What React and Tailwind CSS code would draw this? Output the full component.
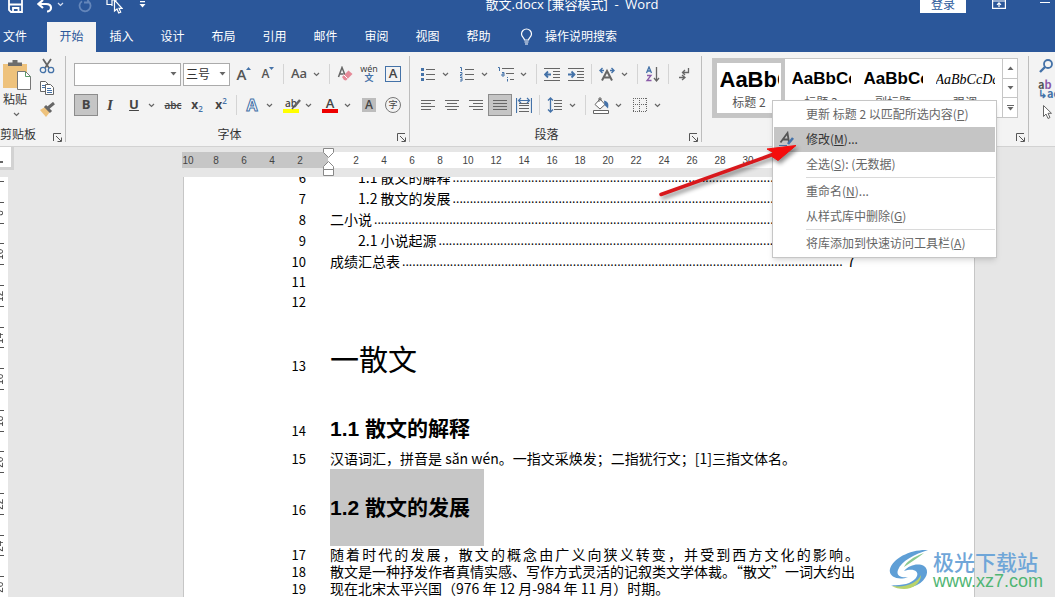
import React from "react";

const TABS = ["插入", "设计", "布局", "引用", "邮件", "审阅", "视图", "帮助"];

const STYLES = [
  { name: "标题 2", sample: "AaBbCc", cls: "text-[22px] font-bold" },
  { name: "标题 3", sample: "AaBbCc", cls: "text-[17px] font-bold" },
  { name: "副标题", sample: "AaBbCc", cls: "text-[17px] font-bold" },
  { name: "强调", sample: "AaBbCcDd", cls: "font-['Liberation_Serif',serif] text-[14px] italic" },
];

const TOC = [
  { no: 6, text: "1.1 散文的解释", sub: true },
  { no: 7, text: "1.2 散文的发展", sub: true },
  { no: 8, text: "二小说" },
  { no: 9, text: "2.1 小说起源", sub: true },
  { no: 10, text: "成绩汇总表", page: 7 },
];

const MENU = [
  { text: "更新 标题 2 以匹配所选内容", hotkey: "P" },
  { text: "修改", hotkey: "M", tail: "...", active: true },
  { text: "全选", hotkey: "S", tail: ": (无数据)" },
  null,
  { text: "重命名", hotkey: "N", tail: "..." },
  { text: "从样式库中删除", hotkey: "G" },
  null,
  { text: "将库添加到快速访问工具栏", hotkey: "A" },
];

const GRAY = "#666666";
const BLUE = "#4472a8";

function Chevron({ color = GRAY }) {
  return (
    <svg width="7" height="5" viewBox="0 0 7 5" fill="none" stroke={color} strokeWidth="1.2">
      <path d="M1 1l2.5 2.5L6 1" />
    </svg>
  );
}

function Triangle({ up }) {
  return (
    <svg width="7" height="4" viewBox="0 0 7 4" fill={GRAY}>
      <path d={up ? "M0.5 4L3.5 0.5 6.5 4z" : "M0.5 0L3.5 3.5 6.5 0z"} />
    </svg>
  );
}

function Tool({ label, active, drop, children }) {
  return (
    <>
      <button
        aria-label={label}
        className={`flex h-[22px] w-6 shrink-0 items-center justify-center ${
          active ? "border border-[#8c8c8c] bg-[#c5c5c5]" : ""
        }`}
      >
        {children}
      </button>
      {drop && (
        <button aria-label={`${label}选项`} className="flex h-[22px] w-[15px] shrink-0 items-center pl-0.5">
          <Chevron />
        </button>
      )}
    </>
  );
}

const Sep = () => <div className="mx-[3px] h-5 w-px shrink-0 bg-[#d4d4d4]" />;

function Icon({ w = 16, h = 16, children }) {
  return (
    <svg width={w} height={h} viewBox={`0 0 ${w} ${h}`} fill="none" stroke={GRAY} strokeWidth="1">
      {children}
    </svg>
  );
}

function AlignIcon({ lines }) {
  return (
    <Icon>
      {lines.map(([x1, x2], i) => (
        <path key={i} d={`M${x1} ${3.5 + i * 3}H${x2}`} />
      ))}
    </Icon>
  );
}

function Launcher({ label }) {
  return (
    <button aria-label={label} className="mr-[3px] self-end">
      <Icon w={9} h={9}>
        <path d="M0.5 8V0.5H8M3 3l5 5M8.5 4.5v4h-4" stroke="#555" />
      </Icon>
    </button>
  );
}

function Group({ label, className = "", children }) {
  return (
    <section className={`relative my-1 flex shrink-0 flex-col border-r border-[#bdbdbd] pt-[7px] ${className}`}>
      <div className="flex h-[63px] flex-col gap-[9px]">{children}</div>
      <div className="flex h-[17px] items-center">
        <span className="flex-1 pr-3 text-center leading-[17px] whitespace-nowrap text-[#333]">{label}</span>
        <Launcher label={`${label}设置`} />
      </div>
    </section>
  );
}

function TitleBar() {
  return (
    <header className="flex h-[22px] items-start bg-[#2b579a] text-white">
      <div className="flex w-56 shrink-0 items-start pl-2">
        <button aria-label="保存" className="mr-[14px]">
          <svg width="15" height="13" viewBox="0 0 15 13" fill="none" stroke="#fff" strokeWidth="1.8">
            <path d="M1 0v10l2 2h11V0M1 4.500h13" />
            <path d="M5 12V8h5.500v4" />
          </svg>
        </button>
        <button aria-label="撤消">
          <svg width="16" height="13" viewBox="0 0 16 13" fill="none" stroke="#fff" strokeWidth="2.200">
            <path d="M1.500 4H9c3 0 5 1.500 5 3.800S12 11.500 10 11.500M6 0L1.500 4 6 8" />
          </svg>
        </button>
        <button aria-label="撤消选项" className="mr-[14px] pt-0.5 pl-1">
          <Chevron color="#d5def0" />
        </button>
        <button aria-label="恢复" className="mr-[14px]">
          <svg width="14" height="13" viewBox="0 0 14 13" fill="none" stroke="#6486ba" strokeWidth="1.8">
            <path d="M4 1.200A5.500 5.500 0 1 0 10.500 1.500M10 -2v4.500H6" />
          </svg>
        </button>
        <button aria-label="触摸模式" className="mr-[16px]">
          <svg width="17" height="14" viewBox="0 0 17 14" fill="none" stroke="#fff" strokeWidth="1.200">
            <path d="M1 0v4.500h5M6 0v6M6 0h5" />
            <path d="M8.500 0v11l2.500-2 1.700 4 2-.9-1.700-3.800h3L8.500 0z" fill="#2b579a" />
          </svg>
        </button>
        <button aria-label="自定义快速访问工具栏">
          <svg width="7" height="8" viewBox="0 0 7 8" fill="#fff">
            <path d="M1 1h5v1.200H1zM0.500 4h6L3.500 7.500z" />
          </svg>
        </button>
      </div>
      <h1 className="-mt-[5px] flex-1 text-center font-['Open_Sans','Noto_Sans_CJK_SC',sans-serif] text-[13px] leading-[18px] whitespace-pre">
        散文.docx [兼容模式]{"  -  "}Word
      </h1>
      <div className="flex w-[135px] shrink-0 items-start">
        <button className="h-[13px] w-[46px] bg-white text-[#2b579a]">
          <span className="-mt-[6px] block leading-[18px]">登录</span>
        </button>
        <button aria-label="功能区显示选项" className="ml-[26px]">
          <svg width="14" height="9" viewBox="0 0 14 9" fill="none" stroke="#fff" strokeWidth="1.200">
            <path d="M0.600 0v8.400h12.800V0M0 1h14M7 7V3M5 4.800l2-2 2 2" />
          </svg>
        </button>
        <button aria-label="最小化" className="mt-[2px] ml-[34px] h-px w-2.5 bg-white" />
      </div>
    </header>
  );
}

function TabBar() {
  return (
    <nav className="flex h-[30px] bg-[#2b579a] text-white">
      <button className="w-[47px] pb-0.5 pl-[3px] text-left">文件</button>
      <button className="w-[49px] bg-[#f3f3f3] pb-0.5 text-[#2b579a]">开始</button>
      {TABS.map((tab) => (
        <button key={tab} className="w-[51px] pb-0.5">
          {tab}
        </button>
      ))}
      <button className="flex items-center gap-3 pb-0.5 pl-4">
        <svg width="13" height="17" viewBox="0 0 13 17" fill="none" stroke="#fff" strokeWidth="1.200">
          <path d="M4.500 12c0-2-3-3-3-6a5 5 0 0 1 10 0c0 3-3 4-3 6zM4.500 14h4M5 16h3" />
        </svg>
        操作说明搜索
      </button>
    </nav>
  );
}

function Clipboard() {
  return (
    <section className="my-1 flex w-[66px] shrink-0 flex-col border-r border-[#bdbdbd]">
      <div className="flex h-[70px]">
        <button className="flex w-[34px] flex-col items-start pt-1 pl-[3px] text-[#333]">
          <svg width="28" height="30" viewBox="0 0 28 30" fill="none">
            <path d="M0 4h24v24H0z" fill="#eec27c" />
            <path d="M5 6V2.500h4.500V0h5v2.500H19V6z" fill="#6d6d6d" />
            <path d="M14.500 11.500h8l5 5v13h-13z" fill="#fff" stroke="#777" />
            <path d="M22.500 11.500v5h5" stroke="#5b9a68" />
          </svg>
          <span className="leading-[18px]">粘贴</span>
          <span className="mt-1 ml-[10px]">
            <Chevron />
          </span>
        </button>
        <div className="flex flex-col items-center gap-[6px] pt-0.5 pl-[5px]">
          <button aria-label="剪切">
            <Icon w={16} h={16}>
              <path d="M4 1l6 9M12 1L6 10" strokeWidth="1.800" />
              <circle cx="4" cy="12" r="2.700" stroke={BLUE} strokeWidth="1.300" />
              <circle cx="12" cy="12" r="2.700" stroke={BLUE} strokeWidth="1.300" />
            </Icon>
          </button>
          <button aria-label="复制">
            <Icon w={16} h={16}>
              <path d="M1.500 1.500h5l3 3v7h-8z" fill="#fff" />
              <path d="M6.500 4.500h5l3 3v7h-8z" fill="#fff" />
              <path d="M8 8.500h4M8 10.500h5M8 12.500h5M3 5.500h3M3 7.500h3" stroke={BLUE} />
            </Icon>
          </button>
          <button aria-label="格式刷">
            <Icon w={16} h={16}>
              <path d="M1 8l5-3 5 5-4 5z" fill="#eec27c" stroke="none" />
              <path d="M6 4l6 6M9 6l6-5" strokeWidth="3" />
            </Icon>
          </button>
        </div>
      </div>
      <div className="flex h-[17px] items-center justify-between">
        <span className="leading-[17px] whitespace-nowrap text-[#333]">剪贴板</span>
        <Launcher label="剪贴板设置" />
      </div>
    </section>
  );
}

function FontGroup() {
  return (
    <Group label="字体" className="w-[344px] pl-2">
      <div className="flex h-[22px] items-center">
        <label className="relative mr-0.5 flex items-center">
          <select
            aria-label="字体"
            className="h-[23px] w-[107px] appearance-none border border-[#ababab] bg-white px-1 outline-none"
          />
          <span className="pointer-events-none absolute right-1">
            <Triangle />
          </span>
        </label>
        <label className="relative mr-0.5 flex items-center">
          <select
            aria-label="字号"
            className="h-[23px] w-[47px] appearance-none border border-[#ababab] bg-white px-0.5 text-[#333] outline-none"
          >
            <option>三号</option>
          </select>
          <span className="pointer-events-none absolute right-1">
            <Triangle />
          </span>
        </label>
        <Tool label="增大字号">
          <span className="font-['Open_Sans',sans-serif] text-[15px] font-semibold text-[#555]">A</span>
          <svg width="5" height="3" viewBox="0 0 5 3" fill={BLUE} className="mb-3">
            <path d="M0 3L2.500 0 5 3z" />
          </svg>
        </Tool>
        <Tool label="减小字号">
          <span className="font-['Open_Sans',sans-serif] text-[12px] font-semibold text-[#555]">A</span>
          <svg width="5" height="3" viewBox="0 0 5 3" fill={BLUE} className="mb-3">
            <path d="M0 0l2.500 3L5 0z" />
          </svg>
        </Tool>
        <Sep />
        <Tool label="更改大小写" drop>
          <span className="font-['Open_Sans',sans-serif] text-[13px] font-semibold text-[#555]">Aa</span>
        </Tool>
        <Sep />
        <Tool label="清除格式">
          <Icon w={16} h={16}>
            <path d="M1.500 11L5 1.500 8 9M2.500 8h4" strokeWidth="1.500" />
            <path d="M5 11l6.500-6.500 4 3.500L9 14.500 7 14z" fill="#e58a98" stroke="none" />
            <path d="M7 9l3.500 3.500" stroke="#fff" />
          </Icon>
        </Tool>
        <Tool label="拼音指南">
          <span className="flex flex-col items-center">
            <span className="font-['Open_Sans',sans-serif] text-[9px] leading-[8px] text-[#333]">wén</span>
            <span className="text-[9px] leading-[10px] font-bold text-[#4472a8]">文</span>
          </span>
        </Tool>
        <Tool label="字符边框">
          <span className="flex h-4 w-4 items-center justify-center border border-[#4472a8] font-['Open_Sans',sans-serif] text-[13px] font-semibold text-[#444]">
            A
          </span>
        </Tool>
      </div>
      <div className="flex h-[22px] items-center font-['Open_Sans','Noto_Sans_CJK_SC',sans-serif] text-[#444]">
        <Tool label="加粗" active>
          <span className="text-[13px] font-bold">B</span>
        </Tool>
        <Tool label="倾斜">
          <span className="font-['Liberation_Serif',serif] text-[15px] font-bold italic">I</span>
        </Tool>
        <Tool label="下划线" drop>
          <span className="text-[13px] font-bold underline">U</span>
        </Tool>
        <Tool label="删除线">
          <span className="text-[10px] font-semibold line-through">abc</span>
        </Tool>
        <Tool label="下标">
          <span className="text-[12px] font-bold">x</span>
          <span className="mt-2 text-[8px] font-semibold text-[#4472a8]">2</span>
        </Tool>
        <Tool label="上标">
          <span className="text-[12px] font-bold">x</span>
          <span className="mb-2 text-[8px] font-semibold text-[#4472a8]">2</span>
        </Tool>
        <Sep />
        <Tool label="文本效果" drop>
          <span className="text-[16px] font-bold text-white [-webkit-text-stroke:1px_#4472a8]">A</span>
        </Tool>
        <Tool label="突出显示" drop>
          <span className="flex flex-col items-center">
            <span className="relative text-[10px] leading-[12px] font-semibold">
              ab
              <svg width="10" height="11" viewBox="0 0 10 11" className="absolute top-0.5 left-1.5" fill="none">
                <path d="M9 1L3 8" stroke="#666" strokeWidth="2.500" />
                <path d="M3.500 7L1 10" stroke="#555" strokeWidth="1.500" />
              </svg>
            </span>
            <span className="h-[4px] w-4 bg-[#ffff00]" />
          </span>
        </Tool>
        <Tool label="字体颜色" drop>
          <span className="flex flex-col items-center">
            <span className="text-[13px] leading-[12px] font-semibold">A</span>
            <span className="h-[4px] w-4 bg-[#ee0000]" />
          </span>
        </Tool>
        <Tool label="字符底纹">
          <span className="h-[14px] w-[14px] bg-[#bdbdbd] text-[12px] leading-[14px] font-semibold">A</span>
        </Tool>
        <Tool label="带圈字符">
          <span className="h-4 w-4 rounded-full border border-[#777] text-[9px] leading-[14px]">字</span>
        </Tool>
      </div>
    </Group>
  );
}

function ParagraphGroup() {
  return (
    <Group label="段落" className="w-[292px] pl-[6px]">
      <div className="flex h-[22px] items-center">
        <Tool label="项目符号" drop>
          <Icon>
            <path d="M6 3.500h9M6 8.500h9M6 13.500h9" />
            <path d="M1 3.500h3M1 8.500h3M1 13.500h3" stroke={BLUE} strokeWidth="3" />
          </Icon>
        </Tool>
        <Tool label="编号" drop>
          <Icon>
            <path d="M6 3.500h9M6 8.500h9M6 13.500h9" />
            <path d="M1 1.500h1.500V5M1 6.500h2v2H1.500v1.500h2M1 11.500h2v3.500H1M1.500 13.500h1" stroke={BLUE} />
          </Icon>
        </Tool>
        <Tool label="多级列表" drop>
          <Icon w={18} h={16}>
            <path d="M5 2.500h12M9 7.500h8M13 13.500h4" />
            <path d="M1 1.500h1.500V5M5 6.500h2v3.500H5V8h2M10.500 11v1M10.500 13v2.500" stroke={BLUE} />
          </Icon>
        </Tool>
        <Sep />
        <Tool label="减少缩进量">
          <Icon>
            <path d="M0 2.500h16M9 5.500h7M9 8.500h7M9 11.500h7M0 14.500h16" />
            <path d="M7 8.500H1M4 5.500l-3 3 3 3" stroke={BLUE} strokeWidth="1.800" />
          </Icon>
        </Tool>
        <Tool label="增加缩进量">
          <Icon>
            <path d="M0 2.500h16M9 5.500h7M9 8.500h7M9 11.500h7M0 14.500h16" />
            <path d="M0 8.500h6M3.500 5.500l3 3-3 3" stroke={BLUE} strokeWidth="1.800" />
          </Icon>
        </Tool>
        <Sep />
        <Tool label="中文版式" drop>
          <Icon>
            <path d="M3 14.500L8 5l5 9.500M5 11.500h6" strokeWidth="2" />
            <path d="M5 4.500H1M3.500 2L1 4.500 3.500 7M11 4.500h4M12.500 2L15 4.500 12.500 7" stroke={BLUE} strokeWidth="1.400" />
          </Icon>
        </Tool>
        <Sep />
        <Tool label="排序">
          <Icon>
            <path d="M1.500 7L4 1l2.500 6M2.500 5h3" stroke={BLUE} strokeWidth="1.300" />
            <path d="M2 9.500h4L2 14.500h4.500" stroke="#8a5aa8" strokeWidth="1.300" />
            <path d="M11.500 1v14M9 12l2.500 3 2.500-3" strokeWidth="1.300" />
          </Icon>
        </Tool>
        <Sep />
        <Tool label="显示编辑标记">
          <Icon w={14} h={14}>
            <path d="M11.500 1v4.500H6M8 3L5.500 5.500 8 8M2 10.500h6M5 8l3 2.500L5 13" strokeWidth="1.300" />
          </Icon>
        </Tool>
      </div>
      <div className="flex h-[22px] items-center">
        <Tool label="左对齐">
          <AlignIcon lines={[[1, 15], [1, 11], [1, 15], [1, 11]]} />
        </Tool>
        <Tool label="居中">
          <AlignIcon lines={[[1, 15], [3, 13], [1, 15], [3, 13]]} />
        </Tool>
        <Tool label="右对齐">
          <AlignIcon lines={[[1, 15], [5, 15], [1, 15], [5, 15]]} />
        </Tool>
        <Tool label="两端对齐" active>
          <AlignIcon lines={[[1, 15], [1, 15], [1, 15], [1, 15]]} />
        </Tool>
        <Tool label="分散对齐">
          <Icon>
            <path d="M3 6.500h10M3 8.500h10M3 11.500h10M3 14.500h10" />
            <path d="M0.500 1v15M15.500 1v15M3 3.500h10M5 1L2.500 3.500 5 6M11 1l2.500 2.500L11 6" stroke={BLUE} strokeWidth="1.200" />
          </Icon>
        </Tool>
        <Sep />
        <Tool label="行距" drop>
          <Icon>
            <path d="M7 3.500h8M7 6.500h8M7 9.500h8M7 12.500h8" />
            <path d="M3.500 1v14M1 3.500L3.500 1 6 3.500M1 12.500L3.500 15 6 12.500" stroke={BLUE} strokeWidth="1.300" />
          </Icon>
        </Tool>
        <Sep />
        <Tool label="底纹" drop>
          <Icon w={18} h={17}>
            <path d="M3 7.500L8 2l5 5.500L8 12z" fill="#fff" />
            <path d="M7 5V1h2v3" />
            <path d="M12 3.500c4 1 5 3 4 8L12.500 8z" fill={BLUE} stroke="none" />
            <path d="M1.500 13.500h15v3h-15z" fill="#fff" />
          </Icon>
        </Tool>
        <Tool label="边框" drop>
          <Icon w={14} h={14}>
            <path d="M0 0.500h14M0 13.500h14M0.500 0v14M13.500 0v14M6.500 0v14M0 6.500h14" strokeDasharray="1 1" />
          </Icon>
        </Tool>
      </div>
    </Group>
  );
}

function ContextMenu() {
  return (
    <div className="absolute top-[44px] left-[70px] z-20 w-[225px]">
      <div role="menu" className="border border-[#c6c6c6] bg-white p-px text-[#666] shadow-md">
        {MENU.map((item, i) =>
          item ? (
            <button
              key={i}
              role="menuitem"
              className={`flex h-[25px] w-full items-center pb-0.5 whitespace-nowrap ${
                item.active ? "bg-[#c5c5c5] text-[#333]" : ""
              }`}
            >
              <span className="flex w-8 shrink-0 pl-1">
                {item.active && (
                  <Icon w={16} h={16}>
                    <path d="M2.500 11.500L9.500 2l1.500 9.500M5 8.500h5.500" stroke="#555" strokeWidth="1.800" />
                    <path d="M1 14.500h8" stroke={BLUE} />
                    <path d="M15 7l-5 6" stroke={BLUE} strokeWidth="2.600" />
                  </Icon>
                )}
              </span>
              <span>
                {item.text}(<u>{item.hotkey}</u>){item.tail}
              </span>
            </button>
          ) : (
            <div key={i} className="mb-px ml-8 h-px bg-[#dadada]" />
          )
        )}
      </div>
      <svg
        width="150"
        height="64"
        viewBox="0 0 150 64"
        className="pointer-events-none absolute top-[40px] -left-[116px] drop-shadow-[2px_3px_2px_rgba(0,0,0,0.45)]"
      >
        <path d="M5 54.500L118 14" stroke="#d8181c" strokeWidth="3.500" strokeLinecap="round" />
        <path d="M140 5.500L111 9l6 3.500-1 4 6 4z" fill="#f40d0d" stroke="#f40d0d" strokeLinejoin="round" />
      </svg>
    </div>
  );
}

function StylesGroup() {
  return (
    <section className="relative my-1 flex w-[327px] shrink-0 flex-col border-r border-[#bdbdbd] pt-0.5 pl-[10px]">
      <div className="mr-[10px] flex h-[60px] border border-[#c6c6c6] bg-white">
        {STYLES.map((s, i) => (
          <button
            key={i}
            className={`flex w-[72px] shrink-0 flex-col items-center border-4 ${
              i === 0 ? "border-[#c5c5c5]" : "border-transparent"
            }`}
          >
            <span
              className={`flex h-[32px] w-[59px] items-center overflow-hidden font-['Liberation_Sans',sans-serif] text-black ${s.cls}`}
            >
              {s.sample}
            </span>
            <span className="leading-[14px] text-[#555]">{s.name}</span>
          </button>
        ))}
        <div className="ml-auto flex w-[15px] flex-col divide-y divide-[#c6c6c6] border-l border-[#c6c6c6]">
          <button aria-label="上一行" className="flex flex-1 items-center justify-center">
            <Triangle up />
          </button>
          <button aria-label="下一行" className="flex flex-1 items-center justify-center">
            <Triangle />
          </button>
          <button aria-label="其他" className="flex flex-1 flex-col items-center justify-center gap-px">
            <span className="h-px w-[7px] bg-[#666]" />
            <Triangle />
          </button>
        </div>
      </div>
      <div className="mt-auto flex justify-end">
        <Launcher label="样式设置" />
      </div>
      <ContextMenu />
    </section>
  );
}

function EditingTools() {
  return (
    <div className="flex flex-1 flex-col gap-[6px] overflow-hidden pt-[6px] pl-[9px]">
      <button aria-label="查找" className="w-4">
        <Icon>
          <circle cx="10" cy="6" r="4" stroke={BLUE} strokeWidth="1.800" />
          <path d="M7 9L2 14" stroke={BLUE} strokeWidth="2.400" />
        </Icon>
      </button>
      <button aria-label="替换" className="flex w-5 flex-col text-left text-[11px] leading-[9px] font-semibold">
        <span className="text-[#555]">
          a<span className="text-[#8a5aa8]">b</span>
        </span>
        <span className="text-[#4472a8]">↳ac</span>
      </button>
      <button aria-label="选择" className="w-4 pl-1">
        <Icon w={12} h={16}>
          <path d="M1.500 1.500v11l2.500-2.500 2 4.500 2-1-2-4.200h3.500z" fill="#fff" />
        </Icon>
      </button>
    </div>
  );
}

function Ruler() {
  return (
    <div className="flex h-[30px] items-start">
      <div className="h-[23px] w-[14px] shrink-0 border-r-[3px] border-b-[3px] border-[#d2d2d2] bg-white pt-[14px]">
        <div className="h-0.5 w-[3px] bg-[#666]" />
      </div>
      <div className="relative mt-[5px] mr-20 ml-[168px] flex h-4 flex-1 font-['Liberation_Sans',sans-serif] text-[10px] leading-[17px] text-[#444]">
        <div className="flex w-[146px] shrink-0 justify-end overflow-hidden bg-[#c6c6c6] pr-[14px]">
          {[10, 8, 6, 4, 2].map((n) => (
            <span key={n} className="w-7 shrink-0 text-center">
              {n}
            </span>
          ))}
        </div>
        <div className="flex min-w-0 flex-1 overflow-hidden bg-white pl-[14px]">
          {Array.from({ length: 15 }, (_, i) => (
            <span key={i} className="w-7 shrink-0 text-center">
              {(i + 1) * 2}
            </span>
          ))}
        </div>
        <svg width="11" height="28" viewBox="0 0 11 28" className="absolute -top-1 left-[141px]" fill="#fff" stroke="#888">
          <path d="M0.500 0.500h10v4L5.500 9.500 0.500 4.500zM5.500 13.500l5 5v3H0.500v-3zM0.500 21.500h10v6H0.500z" />
        </svg>
      </div>
    </div>
  );
}

function VerticalRuler() {
  return (
    <div className="flex w-2 shrink-0 flex-col overflow-hidden bg-white pt-1">
      {Array.from({ length: 20 }, (_, i) => (
        <div key={i} className="flex min-h-0 flex-1 flex-col">
          <div className="h-px w-1 shrink-0 bg-[#555]" />
          {i % 2 === 1 && (
            <span className="-ml-[5px] flex-1 rotate-180 self-start text-center font-['Liberation_Sans',sans-serif] text-[10px] leading-[10px] text-[#444] [writing-mode:vertical-rl]">
              {i + 7}
            </span>
          )}
        </div>
      ))}
    </div>
  );
}

function Line({ no, children }) {
  return (
    <div className="flex items-baseline gap-6">
      <span className="w-[122px] shrink-0 text-right text-[13px]">{no}</span>
      <div className="min-w-0 flex-1 whitespace-nowrap">{children}</div>
    </div>
  );
}

function Page() {
  return (
    <main className="mr-20 ml-[175px] flex-1 border-x border-[#c6c6c6] bg-white pr-[115px] text-[14px] text-black">
      <div className="-mt-[10px] leading-[20px]">
        {TOC.map((row) => (
          <Line key={row.no} no={row.no}>
            <a href={`#line-${row.no}`} className={`flex ${row.sub ? "pl-7" : ""}`}>
              {row.text}
              <span className="ml-0.5 w-0 flex-1 overflow-hidden font-['Open_Sans',sans-serif] text-[13px]">
                {".".repeat(160)}
              </span>
              {row.page && <span className="ml-1 pr-1">{row.page}</span>}
            </a>
          </Line>
        ))}
      </div>
      <div className="leading-[20px]">
        <Line no={11} />
        <Line no={12} />
      </div>
      <Line no={13}>
        <h2 className="font-['Liberation_Serif','Noto_Sans_CJK_SC',serif] text-[29px] leading-[98px]">一散文</h2>
      </Line>
      <Line no={14}>
        <h3 className="font-['Liberation_Sans','Noto_Sans_CJK_SC',sans-serif] text-[21px] leading-[38px] font-bold">
          1.1 散文的解释
        </h3>
      </Line>
      <div className="leading-[20px]">
        <Line no={15}>汉语词汇，拼音是 sǎn wén。一指文采焕发；二指犹行文；[1]三指文体名。</Line>
      </div>
      <Line no={16}>
        <h3 className="w-fit bg-[#c6c6c6] pr-[14px] font-['Liberation_Sans','Noto_Sans_CJK_SC',sans-serif] text-[21px] leading-[77px] font-bold">
          1.2 散文的发展
        </h3>
      </Line>
      <div className="leading-[17px]">
        <Line no={17}>
          <p className="text-justify whitespace-normal [text-align-last:justify]">
            随着时代的发展，散文的概念由广义向狭义转变，并受到西方文化的影响。
          </p>
        </Line>
        <Line no={18}>散文是一种抒发作者真情实感、写作方式灵活的记叙类文学体裁。“散文”一词大约出</Line>
        <Line no={19}>现在北宋太平兴国（976 年 12 月-984 年 11 月）时期。</Line>
      </div>
    </main>
  );
}

function Watermark() {
  return (
    <div className="absolute right-3 bottom-1.5 flex items-center gap-0.5">
      <svg width="42" height="42" viewBox="0 0 42 42" fill="none">
        <path d="M39 1C22 0 4 9 1 20c-2 8 9 12 18 8-8 1-12-2-10-7C12 12 26 5 39 1z" fill="#5f9fd6" />
        <path d="M35 4C24 8 17 13 15 18c7-5 14-9 20-14z" fill="#8cc98f" />
        <path d="M15 22c5-6 14-8 20-5 6 4 3 14-7 19-8 4-18 4-26 0 12 1 23-2 26-9 2-5-4-8-13-5z" fill="#5f9fd6" />
        <path d="M3 37c14 2 25-3 29-11 0 8-8 14-17 14-5 0-9-1-12-3z" fill="#b9d36a" />
      </svg>
      <div className="flex flex-col">
        <span className="text-[21px] leading-[22px] font-medium text-[#6fa6d8]">极光下载站</span>
        <span className="font-['Liberation_Sans',sans-serif] text-[18px] leading-[18px] text-[#4fb573]">
          www.xz7.com
        </span>
      </div>
    </div>
  );
}

export default function App() {
  return (
    <div
      lang="zh-CN"
      className="relative flex h-screen flex-col overflow-hidden bg-[#e6e6e6] font-['Noto_Sans_CJK_SC',sans-serif] text-[12px]"
    >
      <TitleBar />
      <TabBar />
      <div className="flex h-[95px] shrink-0 border-b border-[#d2d2d2] bg-[#f3f3f3]">
        <Clipboard />
        <FontGroup />
        <ParagraphGroup />
        <StylesGroup />
        <EditingTools />
      </div>
      <Ruler />
      <div className="flex min-h-0 flex-1 overflow-hidden">
        <VerticalRuler />
        <Page />
      </div>
      <Watermark />
    </div>
  );
}
